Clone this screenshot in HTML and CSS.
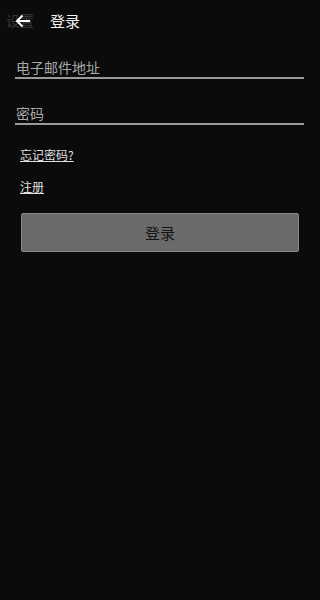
FILE: index.html
```
<!DOCTYPE html>
<html lang="zh">

<head>
    <meta charset="UTF-8">
    <meta name="viewport" content="width=device-width, initial-scale=1.0">
    <title>登录</title>
    <link rel="stylesheet" href="styles.css">
</head>

<body>
    <div id="header">
        <div class="back">
            <span class="back-label">设置</span>
            <svg class="back-arrow" width="16" height="14" viewBox="0 0 16 14">
                <path d="M15 7H2M7.5 1.5L2 7l5.5 5.5" fill="none" stroke="#fff" stroke-width="2" />
            </svg>
        </div>
        <span id="page-title">登录</span>
    </div>

    <div id="form">
        <div class="field field-email">电子邮件地址</div>
        <div class="field field-pass">密码</div>

        <a class="link link-forgot" href="#">忘记密码?</a>
        <a class="link link-register" href="#">注册</a>

        <button class="btn">登录</button>
    </div>
</body>

</html>
```

FILE: styles.css
```
html,
body {
    margin: 0;
    height: 100%;
    width: 100%;
    background-color: #0b0b0b;
    font-family: "Noto Sans CJK SC", "DejaVu Sans", sans-serif;
}

#header {
    height: 40px;
    display: flex;
    align-items: center;
}

.back {
    position: relative;
    width: 38px;
    height: 20px;
    margin-left: 6px;
}

.back-label {
    display: block;
    font-size: 14px;
    line-height: 20px;
    color: #3a3a3a;
}

.back-arrow {
    position: absolute;
    left: 9px;
    top: 4px;
}

#page-title {
    margin-left: 6px;
    font-size: 15px;
    color: #f2f2f2;
}

#form {
    display: flex;
    flex-direction: column;
    align-items: flex-start;
    padding: 0 16px 0 15px;
}

.field {
    align-self: stretch;
    font-size: 14px;
    line-height: 20px;
    color: #a8a8a8;
    padding-left: 1px;
    border-bottom: 2px solid #9a9a9a;
}

.field-email {
    margin-top: 17px;
}

.field-pass {
    margin-top: 24px;
}

.link {
    margin-left: 5px;
    font-size: 12px;
    line-height: 16px;
    color: #e0e0e0;
}

.link-forgot {
    margin-top: 22px;
}

.link-register {
    margin-top: 16px;
}

.btn {
    align-self: stretch;
    margin: 18px 5px 0 6px;
    height: 39px;
    font-family: inherit;
    font-size: 15px;
    color: #141414;
    background-color: #6a6a6a;
    border: 1px solid #8a8a8a;
    border-radius: 2px;
}
```
